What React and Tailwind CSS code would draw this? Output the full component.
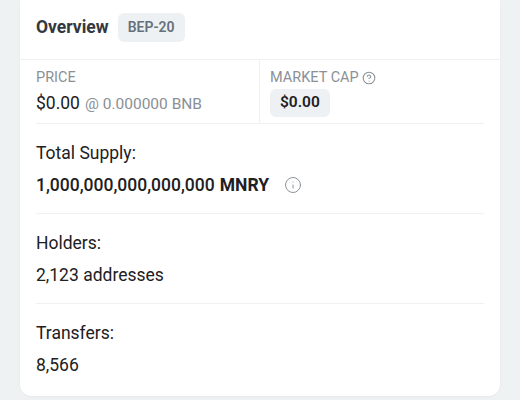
import { Info, CircleHelp } from "lucide-react";

function Stat({ label, children, last }) {
  return (
    <div className={`mx-4 pt-[17px] ${last ? "pb-[19px]" : "pb-4 border-b border-[#eff1f2]"}`}>
      <div className="text-[17.5px] leading-6 text-[#1e2022]">{label}</div>
      <div className="mt-2 text-[17.5px] leading-6 text-[#1e2022]">{children}</div>
    </div>
  );
}

function App() {
  return (
    <div
      className="w-[520px] h-[400px] bg-[#eff2f3] px-5 overflow-hidden"
      style={{ fontFamily: "Roboto, 'Liberation Sans', sans-serif" }}
    >
      <div className="bg-white rounded-b-xl shadow-[0_1px_3px_rgba(0,0,0,0.04)]">
        <div className="h-[60px] px-4 pb-[5px] flex items-center gap-[9px] border-b border-[#eff1f2]">
          <span className="text-[17.5px] font-bold text-[#333840]">Overview</span>
          <span className="h-[29px] px-[10px] flex items-center rounded-md bg-[#eef1f3] text-[14px] font-semibold text-[#66707a]">
            BEP-20
          </span>
        </div>

        <div className="mx-4 h-16 flex border-b border-[#eff1f2]">
          <div className="w-[224px] border-r border-[#eff1f2] pt-[8px]">
            <div className="text-[14.5px] leading-5 text-[#8a9096]">PRICE</div>
            <div className="mt-[2px] flex items-baseline gap-[5px]">
              <span className="text-[17.5px] text-[#1e2022]">$0.00</span>
              <span className="text-[15.5px] text-[#8a9096]">@ 0.000000 BNB</span>
            </div>
          </div>
          <div className="pl-[10px] pt-[8px]">
            <div className="flex items-center gap-[3px] text-[14.5px] leading-5 text-[#8a9096]">
              MARKET CAP
              <CircleHelp size={14} strokeWidth={1.8} />
            </div>
            <div className="mt-[1px] inline-flex h-7 items-center px-[10px] rounded-md bg-[#eef1f3] text-[15.5px] font-semibold text-[#1e2022]">
              $0.00
            </div>
          </div>
        </div>

        <Stat label="Total Supply:">
          <span className="inline-flex items-center">
            <span className="font-medium">1,000,000,000,000,000</span>
            <span className="ml-[5px] font-bold">MNRY</span>
            <Info size={18} strokeWidth={1.3} className="ml-[15px] text-[#8a9096]" />
          </span>
        </Stat>
        <Stat label="Holders:">2,123 addresses</Stat>
        <Stat label="Transfers:" last>8,566</Stat>
      </div>
    </div>
  );
}

export default App;
